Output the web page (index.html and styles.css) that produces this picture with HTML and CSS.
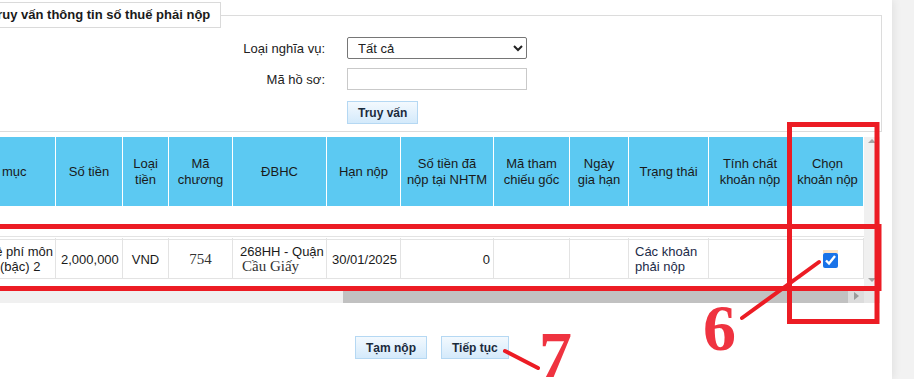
FILE: index.html
```html
<!DOCTYPE html>
<html lang="vi">
<head>
    <meta charset="UTF-8">
    <title>Truy vấn thông tin số thuế phải nộp</title>
    <link rel="stylesheet" href="styles.css">
</head>
<body>
<div class="page">
    <fieldset class="search">
        <legend>Truy vấn thông tin số thuế phải nộp</legend>
        <div class="form">
            <label class="lbl" for="loai">Loại nghĩa vụ:</label>
            <select id="loai" class="ctl">
                <option>Tất cả</option>
            </select>
            <label class="lbl" for="maho">Mã hồ sơ:</label>
            <input id="maho" class="ctl" type="text">
            <span></span>
            <div class="btn-row"><button class="btn">Truy vấn</button></div>
        </div>
    </fieldset>

    <div class="grid">
        <div class="grid-main">
            <div class="grid-view">
                <table class="list">
                    <colgroup>
                        <col class="w-muc">
                        <col class="w-tien">
                        <col class="w-loai">
                        <col class="w-chuong">
                        <col class="w-dbhc">
                        <col class="w-han">
                        <col class="w-danop">
                        <col class="w-thamchieu">
                        <col class="w-giahan">
                        <col class="w-trangthai">
                        <col class="w-tinhchat">
                        <col class="w-chon">
                    </colgroup>
                    <thead>
                        <tr>
                            <th>Tiểu mục</th>
                            <th>Số tiền</th>
                            <th>Loại<br>tiền</th>
                            <th>Mã<br>chương</th>
                            <th>ĐBHC</th>
                            <th>Hạn nộp</th>
                            <th>Số tiền đã<br>nộp tại NHTM</th>
                            <th>Mã tham<br>chiếu gốc</th>
                            <th>Ngày<br>gia hạn</th>
                            <th>Trạng thái</th>
                            <th>Tính chất<br>khoản nộp</th>
                            <th>Chọn<br>khoản nộp</th>
                        </tr>
                    </thead>
                    <tbody>
                        <tr class="gap"><td colspan="12"></td></tr>
                        <tr class="row">
                            <td class="muc">Lệ phí môn<br><span class="ind">(bậc) 2</span></td>
                            <td>2,000,000</td>
                            <td>VND</td>
                            <td class="serif">754</td>
                            <td class="dbhc">268HH - Quận<br><span class="serif">Cầu Giấy</span></td>
                            <td>30/01/2025</td>
                            <td class="amt">0</td>
                            <td></td>
                            <td></td>
                            <td class="st">Các khoản<br>phải nộp</td>
                            <td></td>
                            <td class="pick"><span class="chk"><input type="checkbox" checked></span></td>
                        </tr>
                    </tbody>
                </table>
            </div>
            <div class="vbar"><span class="arr up"></span><span class="arr down"></span></div>
        </div>
        <div class="hbar">
            <div class="track"></div>
            <div class="thumb"></div>
            <div class="hbtn"><span class="arr right"></span></div>
            <div class="corner"></div>
        </div>
    </div>

    <div class="actions">
        <button class="btn">Tạm nộp</button>
        <button class="btn">Tiếp tục</button>
    </div>
</div>

<svg class="marks" width="914" height="379" viewBox="0 0 914 379">
    <g fill="none" stroke="#ec1c24" stroke-width="5">
        <rect x="-10" y="226.5" width="889" height="62"/>
        <rect x="789.5" y="124.5" width="87.5" height="197"/>
    </g>
    <g stroke="#ec1c24" stroke-width="4" stroke-linecap="round">
        <line x1="742" y1="318" x2="819" y2="262"/>
        <line x1="505" y1="351" x2="538" y2="368"/>
    </g>
    <text class="mark-num" x="703" y="350">6</text>
    <text class="mark-num" x="539" y="377">7</text>
</svg>
</body>
</html>
```

FILE: styles.css
```css
html, body{
    margin: 0;
}
body{
    position: relative;
    height: 379px;
    overflow: hidden;
    background: #f2f2f2;
    font: 13px "Liberation Sans", Arial, sans-serif;
    color: #222;
}
.page{
    width: 947px;
    height: 379px;
    margin-left: -55px;
    padding-top: 2px;
    box-sizing: border-box;
    background: #fff;
    box-shadow: 2px 0 8px rgba(0, 0, 0, .07);
}

/* search box */
.search{
    margin: 0 10px 0 0;
    padding: 0;
    min-width: 0;
    border: 1px solid #dcdcdc;
}
.search legend{
    margin-left: 33px;
    padding: 5px 10px;
    border: 1px solid #dadada;
    background: #fff;
    font-weight: bold;
    line-height: 14px;
    color: #1a1a1a;
}
.form{
    display: grid;
    grid-template-columns: 379px 180px;
    column-gap: 22px;
    row-gap: 9px;
    align-items: center;
    padding: 9px 0 7px;
}
.lbl{
    text-align: right;
    color: #222;
}
.ctl{
    width: 180px;
    height: 22px;
    box-sizing: border-box;
    margin: 0;
    font: 13px "Liberation Sans", Arial, sans-serif;
    color: #222;
    background: #fff;
}
select.ctl{
    padding: 0 0 0 6px;
    border: 1px solid #767676;
    border-radius: 2px;
}
input.ctl{
    padding: 0 4px;
    border: 1px solid #c9c9c9;
}
.btn-row{
    margin-top: 2px;
}
.btn{
    height: 23px;
    margin: 0;
    padding: 0 10px;
    border: 1px solid #b5d8f3;
    background: linear-gradient(#f3f9fe, #d4eafb);
    font: bold 12px "Liberation Sans", Arial, sans-serif;
    color: #1b2b3c;
}

/* grid */
.grid{
    margin: 5px 12px 0 0;
}
.grid-main{
    display: flex;
    height: 151px;
}
.grid-view{
    flex: 1;
    overflow: hidden;
}
.list{
    width: 919px;
    table-layout: fixed;
    border-collapse: separate;
    border-spacing: 0;
}
.w-muc{ width: 111px; }
.w-tien{ width: 67px; }
.w-loai{ width: 46px; }
.w-chuong{ width: 64px; }
.w-dbhc{ width: 94px; }
.w-han{ width: 74px; }
.w-danop{ width: 93px; }
.w-thamchieu{ width: 76px; }
.w-giahan{ width: 59px; }
.w-trangthai{ width: 80px; }
.w-tinhchat{ width: 83px; }
.w-chon{ width: 72px; }

.list th{
    height: 69px;
    padding: 0 2px;
    box-sizing: border-box;
    border-right: 1px solid #fff;
    background: #5cc9f2;
    font-weight: normal;
    line-height: 16px;
    color: #1a1a1a;
    white-space: nowrap;
}
.gap td{
    height: 30px;
    padding: 0;
}
.row td{
    height: 43px;
    box-sizing: border-box;
    padding: 0 5px;
    border-top: 4px double #e3e3e3;
    border-bottom: 1px solid #e3e3e3;
    border-right: 1px solid #e3e3e3;
    text-align: center;
    line-height: 15px;
    color: #1a1a1a;
    white-space: nowrap;
}
.row .muc{
    padding-left: 43px;
    text-align: left;
}
.ind{
    padding-left: 12px;
}
.serif{
    font-family: "Liberation Serif", "Times New Roman", serif;
    font-size: 15px;
}
.row td.serif{
    color: #333;
}
.row .dbhc{
    padding-left: 7px;
    text-align: left;
}
.dbhc .serif{
    padding-left: 2px;
    color: #333;
}
.row .amt{
    padding-right: 3px;
    text-align: right;
}
.row .st{
    padding-left: 6px;
    text-align: left;
    color: #1c2b48;
}
.row .pick{
    padding-left: 11px;
}
.chk{
    display: inline-block;
    border-top: 3px solid #fde3c4;
    line-height: 0;
    vertical-align: middle;
}
.chk input{
    width: 15px;
    height: 15px;
    margin: 0;
    accent-color: #1a73e8;
}

/* fake scroll bars */
.vbar{
    width: 16px;
    display: flex;
    flex-direction: column;
    justify-content: space-between;
    align-items: center;
    padding: 2px 0 6px;
    box-sizing: border-box;
    background: #f0f0f0;
}
.arr{
    width: 0;
    height: 0;
    border: 4px solid transparent;
}
.arr.up{
    border-top: 0;
    border-bottom: 4px solid #a3a3a3;
}
.arr.down{
    border-bottom: 0;
    border-top: 4px solid #a3a3a3;
}
.arr.right{
    border-right: 0;
    border-left: 5px solid #9a9a9a;
}
.hbar{
    display: flex;
    height: 15px;
}
.track{
    width: 398px;
    background: #f0f0f0;
}
.thumb{
    width: 505px;
    background: #c1c1c1;
}
.hbtn{
    width: 16px;
    display: flex;
    align-items: center;
    justify-content: center;
    background: #dcdcdc;
}
.corner{
    width: 16px;
    background: #e6e6e6;
}

.actions{
    display: flex;
    gap: 14px;
    margin-top: 33px;
    padding-left: 410px;
}

/* red annotations over the screenshot */
.marks{
    position: absolute;
    left: 0;
    top: 0;
    pointer-events: none;
}
.mark-num{
    font: bold 66px "Liberation Serif", "Times New Roman", serif;
    fill: #ef3340;
}
```
